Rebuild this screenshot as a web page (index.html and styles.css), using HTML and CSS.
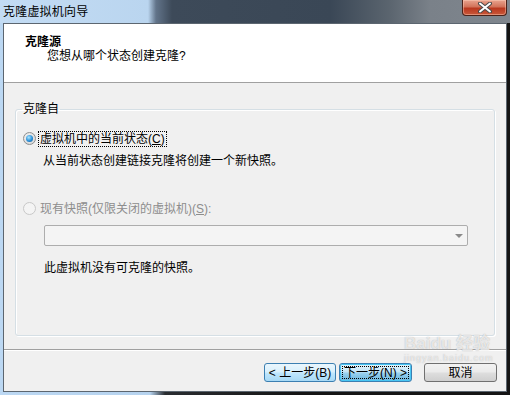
FILE: index.html
```html
<!DOCTYPE html>
<html lang="zh-CN">
<head>
<meta charset="UTF-8">
<title>克隆虚拟机向导</title>
<link rel="stylesheet" href="styles.css">
</head>
<body>
<div class="window">
  <div class="titlebar">
    <span class="title">克隆虚拟机向导</span>
    <div class="close-btn">
      <svg width="16" height="11" viewBox="0 0 16 11">
        <path d="M3 1.5 L13 9.5 M13 1.5 L3 9.5" stroke="#4a4a4a" stroke-width="4" stroke-linecap="round"/>
        <path d="M3 1.5 L13 9.5 M13 1.5 L3 9.5" stroke="#ffffff" stroke-width="2" stroke-linecap="round"/>
      </svg>
    </div>
  </div>

  <div class="client">
    <div class="header">
      <div class="header-title">克隆源</div>
      <div class="header-sub">您想从哪个状态创建克隆?</div>
    </div>

    <div class="body">
      <fieldset class="group">
        <legend>克隆自</legend>

        <div class="option">
          <span class="radio checked"></span>
          <span class="option-label focused">虚拟机中的当前状态(<u>C</u>)</span>
        </div>
        <div class="desc">从当前状态创建链接克隆将创建一个新快照。</div>

        <div class="option option-gap disabled">
          <span class="radio"></span>
          <span class="option-label">现有快照(仅限关闭的虚拟机)(<u>S</u>):</span>
        </div>
        <div class="combo">
          <span class="combo-arrow"></span>
        </div>
        <div class="note">此虚拟机没有可克隆的快照。</div>
      </fieldset>
    </div>

    <div class="footer">
      <button class="btn btn-hover">&lt; 上一步(<u>B</u>)</button>
      <button class="btn btn-default">下一步(<u>N</u>) &gt;</button>
      <button class="btn btn-cancel">取消</button>
    </div>

    <div class="watermark">
      <div class="wm-logo">Bai<span class="wm-paw">du</span> 经验</div>
      <div class="wm-url">jingyan.baidu.com</div>
    </div>
  </div>
</div>
</body>
</html>
```

FILE: styles.css
```css
* {
box-sizing: border-box;
}
body {
margin: 0;
width: 510px;
height: 395px;
overflow: hidden;
font-family: "Liberation Sans", "Noto Sans CJK SC", sans-serif;
font-size: 12px;
line-height: 14px;
color: #000;
background: #1c1c1c;
}
.window {
width: 510px;
height: 395px;
padding: 0 3px 3px 3px;
display: flex;
flex-direction: column;
background: linear-gradient(90deg, #bcd8f3 0, #b6d3ef 150px, #2a2d31 165px, #141414 300px);
}
.titlebar {
height: 23px;
margin: 0 -3px;
padding: 5px 0 0 3px;
display: flex;
justify-content: space-between;
align-items: flex-start;
background: linear-gradient(90deg, #c3dcf4 0, #bad5ef 148px, #62748a 156px, #3d4a59 172px, #3a4756 330px, #5b656f 390px, #7a8189 430px, #7f868e 510px);
}
.title {
color: #000;
letter-spacing: 0.2px;
}
.close-btn {
width: 45px;
height: 16px;
margin-top: -5px;
margin-right: 3px;
display: flex;
align-items: center;
justify-content: center;
border: 1px solid #4b2219;
border-top: none;
border-radius: 0 0 4px 4px;
background: linear-gradient(#e9a48f 0, #d2735a 45%, #b9381f 55%, #c9583a 100%);
box-shadow: inset 0 0 0 1px rgba(255, 210, 190, 0.45);
}
.client {
position: relative;
flex: 1;
display: flex;
flex-direction: column;
border: 1px solid #5c6670;
background: #f0f0f0;
}
.header {
height: 59px;
padding: 11px 0 0 21px;
background: #fff;
border-bottom: 1px solid #a0a0a0;
}
.header-title {
font-weight: bold;
}
.header-sub {
margin: 0 0 0 22px;
}
.body {
height: 267px;
padding: 19px 11px 13px 11px;
display: flex;
border-bottom: 1px solid #a0a0a0;
}
.group {
flex: 1;
margin: 0;
padding: 15px 7px 0 7px;
border: 1px solid #d5dfe5;
border-radius: 3px;
box-shadow: inset 1px 1px 0 #fff, 1px 1px 0 #fff;
min-width: 0;
}
.group legend {
margin-left: -1px;
padding: 0 1px;
}
.option {
display: flex;
align-items: center;
height: 16px;
gap: 3px;
}
.option-gap {
margin-top: 33px;
}
.radio {
width: 13px;
height: 13px;
border-radius: 50%;
border: 1px solid #8e8f8f;
background: radial-gradient(circle at 40% 35%, #f4f4f4 0, #dcdcdc 70%, #cfcfcf 100%);
display: flex;
align-items: center;
justify-content: center;
margin-top: -2px;
}
.radio.checked::after {
content: "";
width: 7px;
height: 7px;
border-radius: 50%;
background: radial-gradient(circle at 40% 35%, #a9e6ff 0, #2a8fd8 55%, #11578f 100%);
}
.disabled .radio {
border-color: #c8c8c8;
background: #f4f4f4;
}
.option-label {
padding: 0 1px;
line-height: 14px;
}
.option-label.focused {
outline: 1px dotted #000;
}
.disabled .option-label {
color: #8d8d8d;
}
.desc {
margin: 7px 0 0 20px;
}
.combo {
position: relative;
width: 424px;
height: 21px;
margin: 8px 0 0 21px;
border: 1px solid #adadad;
border-radius: 2px;
background: #f4f4f4;
}
.combo-arrow {
position: absolute;
right: 4px;
top: 8px;
width: 0;
height: 0;
border-left: 4px solid transparent;
border-right: 4px solid transparent;
border-top: 4px solid #8a8a8a;
}
.note {
margin: 15px 0 0 21px;
}
.footer {
flex: 1;
display: flex;
justify-content: flex-end;
align-items: flex-start;
padding: 12px 9px 0 0;
border-top: 1px solid #fff;
}
.btn {
height: 19px;
width: 73px;
padding: 0;
font-family: inherit;
font-size: 12px;
line-height: 14px;
color: #000;
border-radius: 3px;
}
.btn u {
text-decoration: none;
}
.btn-hover {
width: 72px;
border: 1px solid #3c7fb1;
background: linear-gradient(#eaf6fd 0, #d9f0fc 45%, #bee6fd 55%, #a7d9f5 100%);
}
.btn-default {
margin-left: 3px;
border: 1px solid #3c7fb1;
background: linear-gradient(#e5f4fc 0, #c4e5f6 45%, #98d1ef 55%, #68b3db 100%);
box-shadow: inset 0 0 0 1px #48c6f3;
outline: 1px dotted #000;
outline-offset: -4px;
}
.btn-cancel {
margin-left: 12px;
border: 1px solid #707070;
background: linear-gradient(#f2f2f2 0, #ebebeb 45%, #dddddd 55%, #cfcfcf 100%);
}
.watermark {
position: absolute;
left: 400px;
top: 310px;
color: rgba(255, 255, 255, 0.7);
text-shadow: 0 0 1px rgba(140, 140, 140, 0.7);
pointer-events: none;
}
.wm-logo {
font-size: 17px;
line-height: 19px;
font-weight: bold;
}
.wm-url {
font-size: 9px;
line-height: 10px;
letter-spacing: 1px;
}
```
